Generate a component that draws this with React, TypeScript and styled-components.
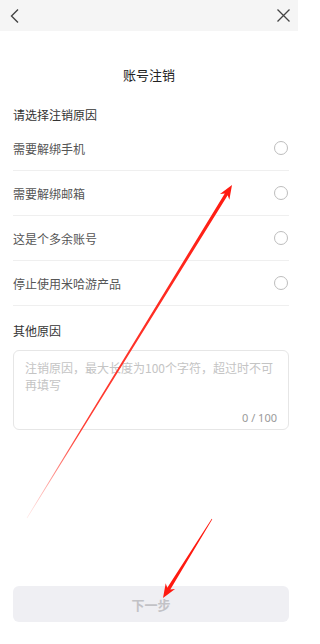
import React from 'react';
import styled, { createGlobalStyle } from 'styled-components';

const GlobalStyle = createGlobalStyle`
  html, body {
    margin: 0;
    padding: 0;
    background: #fff;
  }
  body {
    font-family: "Noto Sans CJK SC", "Noto Sans", sans-serif;
  }
`;

const Page = styled.div`
  position: relative;
  display: flex;
  flex-direction: column;
  width: 298px;
  height: 644px;
  background: #fff;
  overflow: hidden;
`;

const TopBar = styled.div`
  height: 31px;
  background: #f5f5f5;
  display: flex;
  align-items: center;
  justify-content: space-between;
  padding: 0 7px 0 10px;
`;

const IconButton = styled.button`
  border: 0;
  background: none;
  padding: 0;
  display: flex;
  align-items: center;
  cursor: pointer;
`;

const Title = styled.h1`
  margin: 35px 0 0;
  font-size: 13px;
  line-height: 18px;
  font-weight: 400;
  color: #222;
  text-align: center;
`;

const Body = styled.div`
  display: flex;
  flex-direction: column;
  padding: 0 9px 0 13px;
`;

const SectionLabel = styled.div<{ $top: number }>`
  margin-top: ${(p) => p.$top}px;
  font-size: 12px;
  line-height: 18px;
  color: #333;
`;

const ReasonList = styled.ul`
  list-style: none;
  margin: 2px 0 0;
  padding: 0;
`;

const ReasonRow = styled.li`
  height: 44px;
  display: flex;
  align-items: center;
  justify-content: space-between;
  border-bottom: 1px solid #efefef;
  font-size: 12px;
  color: #555;
`;

const Radio = styled.span`
  width: 12px;
  height: 12px;
  border: 1px solid #bdbdbd;
  border-radius: 50%;
  margin-right: 1px;
`;

const TextBox = styled.div`
  margin-top: 10px;
  height: 80px;
  box-sizing: border-box;
  border: 1px solid #e6e6e6;
  border-radius: 6px;
  padding: 8px 11px 4px;
  display: flex;
  flex-direction: column;
  justify-content: space-between;
`;

const Placeholder = styled.div`
  font-size: 12px;
  line-height: 17px;
  color: #c4c4c4;
`;

const Counter = styled.div`
  align-self: flex-end;
  font-size: 11px;
  line-height: 14px;
  color: #9a9a9a;
  font-family: "Noto Sans", sans-serif;
`;

const NextButton = styled.button`
  margin: auto 9px 22px 13px;
  height: 36px;
  border: 0;
  border-radius: 6px;
  background: #efeff3;
  color: #c2c2c6;
  font-family: "Noto Sans CJK SC", sans-serif;
  font-size: 13px;
  font-weight: 700;
`;

const Overlay = styled.svg`
  position: absolute;
  left: 0;
  top: 0;
  width: 298px;
  height: 644px;
  pointer-events: none;
`;

type Pt = [number, number];

function arrowPoints(tail: Pt, tip: Pt, tailW: number, neckW: number, headLen: number, headW: number) {
  const dx = tip[0] - tail[0];
  const dy = tip[1] - tail[1];
  const len = Math.hypot(dx, dy);
  const ux = dx / len;
  const uy = dy / len;
  const nx = -uy;
  const ny = ux;
  const bx = tip[0] - ux * headLen;
  const by = tip[1] - uy * headLen;
  const nbx = tip[0] - ux * (headLen - 3);
  const nby = tip[1] - uy * (headLen - 3);
  const pts: Pt[] = [
    [tail[0] + nx * tailW / 2, tail[1] + ny * tailW / 2],
    [nbx + nx * neckW / 2, nby + ny * neckW / 2],
    [bx + nx * headW / 2, by + ny * headW / 2],
    tip,
    [bx - nx * headW / 2, by - ny * headW / 2],
    [nbx - nx * neckW / 2, nby - ny * neckW / 2],
    [tail[0] - nx * tailW / 2, tail[1] - ny * tailW / 2],
  ];
  return pts.map((p) => p.join(',')).join(' ');
}

const reasons = ['需要解绑手机', '需要解绑邮箱', '这是个多余账号', '停止使用米哈游产品'];

export default function App() {
  return (
    <Page>
      <GlobalStyle />
      <TopBar>
        <IconButton aria-label="back">
          <svg width="10" height="16" viewBox="0 0 10 16">
            <path d="M8 1.5 L1.5 8 L8 14.5" fill="none" stroke="#444" strokeWidth="1.4" />
          </svg>
        </IconButton>
        <IconButton aria-label="close">
          <svg width="15" height="15" viewBox="0 0 15 15">
            <path d="M1.5 1.5 L13.5 13.5 M13.5 1.5 L1.5 13.5" fill="none" stroke="#444" strokeWidth="1.3" />
          </svg>
        </IconButton>
      </TopBar>
      <Title>账号注销</Title>
      <Body>
        <SectionLabel $top={22}>请选择注销原因</SectionLabel>
        <ReasonList>
          {reasons.map((r) => (
            <ReasonRow key={r}>
              {r}
              <Radio />
            </ReasonRow>
          ))}
        </ReasonList>
        <SectionLabel $top={16}>其他原因</SectionLabel>
        <TextBox>
          <Placeholder>注销原因，最大长度为100个字符，超过时不可再填写</Placeholder>
          <Counter>0 / 100</Counter>
        </TextBox>
      </Body>
      <NextButton>下一步</NextButton>
      <Overlay viewBox="0 0 298 644">
        <defs>
          <linearGradient id="fade" x1="27" y1="518" x2="232" y2="185" gradientUnits="userSpaceOnUse">
            <stop offset="0" stopColor="#ff2a1f" stopOpacity="0.1" />
            <stop offset="0.25" stopColor="#ff2a1f" stopOpacity="0.9" />
            <stop offset="1" stopColor="#ff1a10" />
          </linearGradient>
        </defs>
        <polygon points={arrowPoints([27, 518], [232, 185], 0.6, 3.4, 14, 11)} fill="url(#fade)" />
        <polygon points={arrowPoints([212, 519], [163, 598], 0.6, 3.6, 14, 11)} fill="#ff1a10" />
      </Overlay>
    </Page>
  );
}
